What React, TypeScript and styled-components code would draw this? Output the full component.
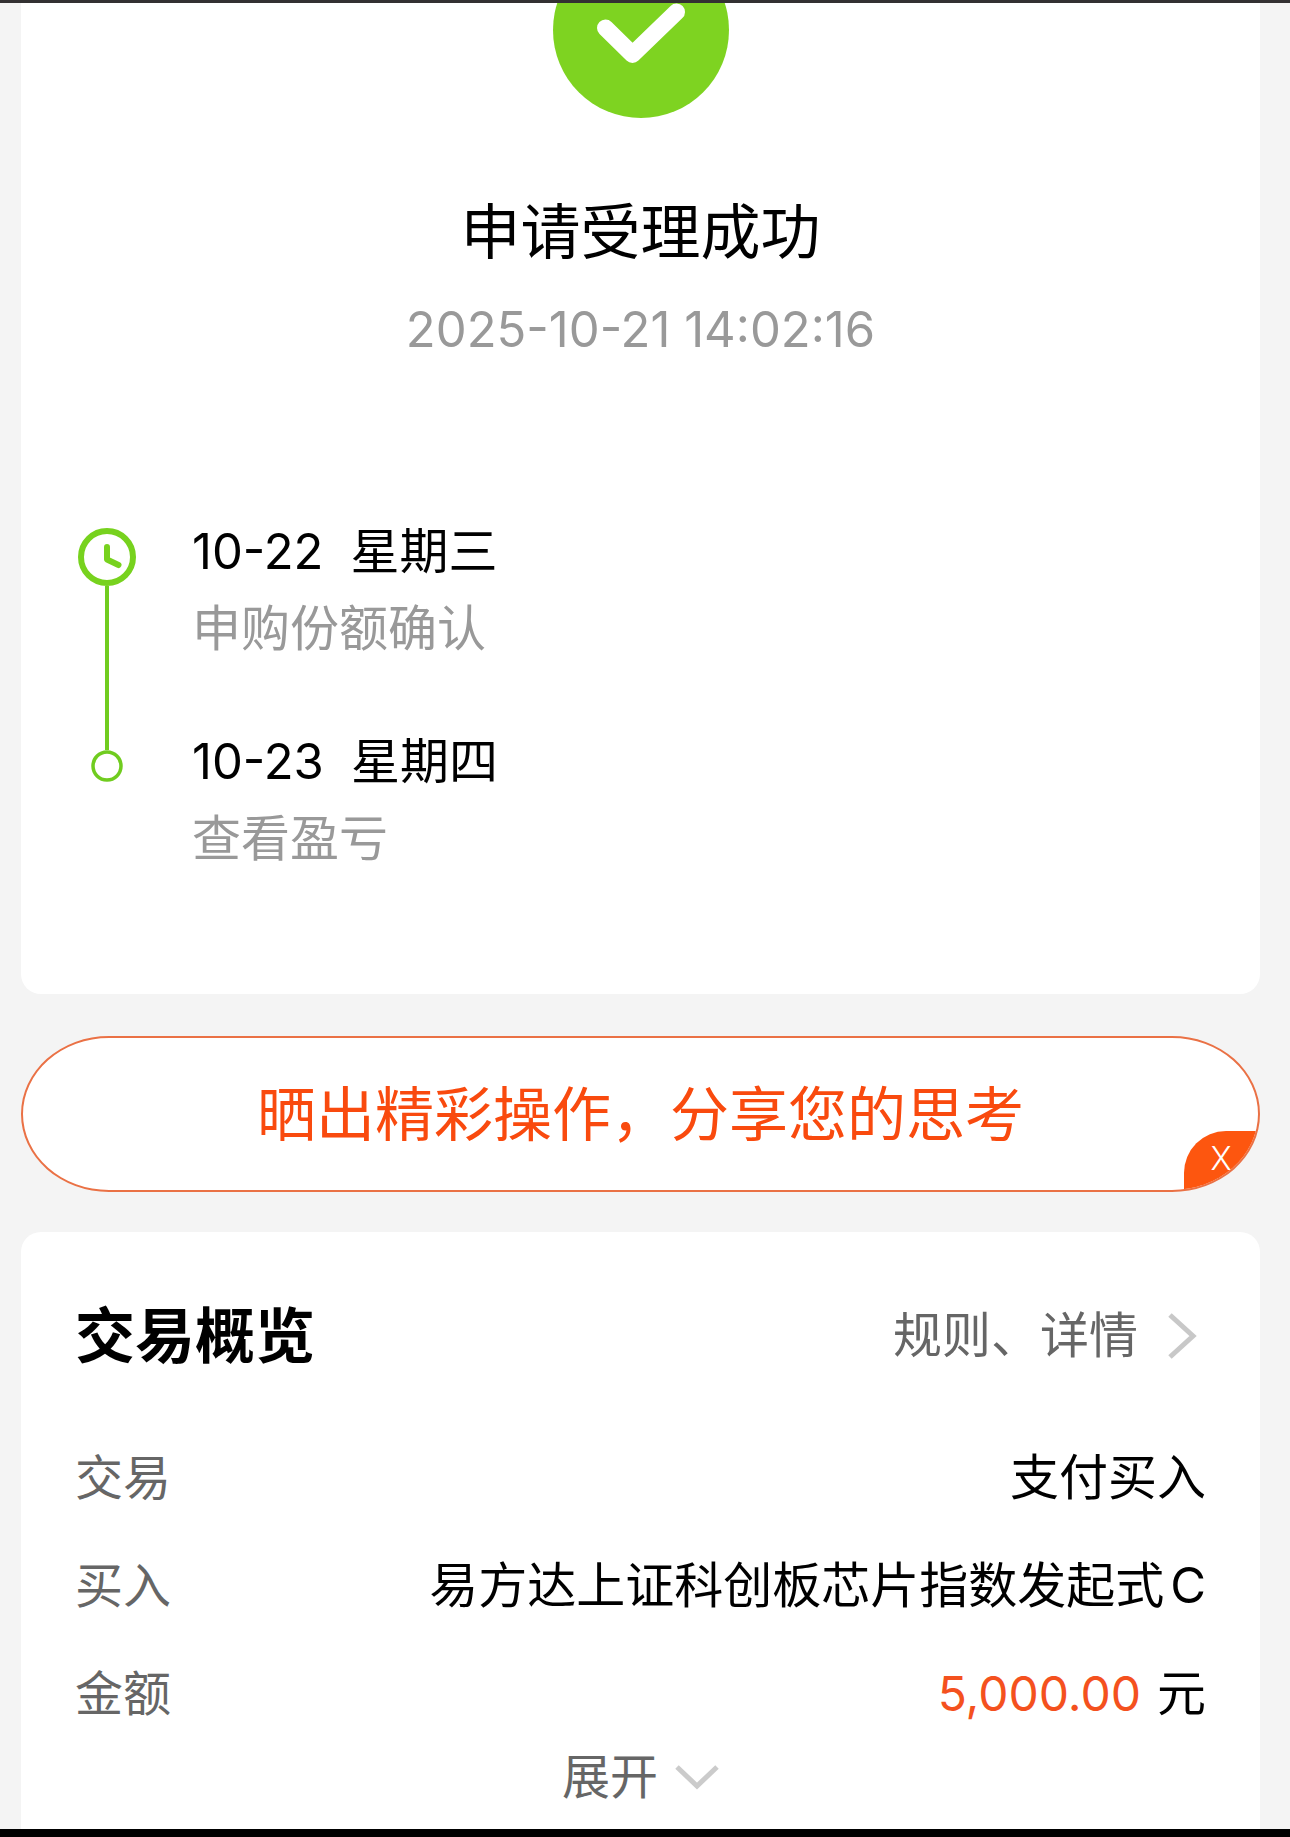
import React from "react";
import styled, { createGlobalStyle } from "styled-components";

const GlobalStyle = createGlobalStyle`
  *, *::before, *::after { box-sizing: border-box; }
  body {
    margin: 0;
    background: #f4f4f4;
    color: #000;
    font-family: Inter, "Noto Sans CJK SC", sans-serif;
    font-size: 49px;
    line-height: 60px;
  }
  button {
    margin: 0;
    padding: 0;
    border: 0;
    background: none;
    color: inherit;
    font: inherit;
    cursor: pointer;
  }
  h1, h2, p, ol, dl, dd { margin: 0; padding: 0; }
`;

const Page = styled.div`
  border-top: 3px solid #333132;
  border-bottom: 9px solid #000;
`;

const Content = styled.main`
  display: flex;
  flex-direction: column;
  padding: 0 30px 0 21px;
`;

const ResultCard = styled.section`
  display: flex;
  flex-direction: column;
  align-items: center;
  padding-bottom: 125px;
  border-radius: 0 0 20px 20px;
  background: #fff;
`;

const SuccessIcon = styled.svg`
  display: block;
  width: 176px;
  height: 115px;
`;

const ResultTitle = styled.h1`
  margin-top: 72px;
  font-size: 60px;
  font-weight: 400;
  line-height: 84px;
`;

const ResultTime = styled.p`
  margin-top: 26px;
  color: #999;
`;

const Timeline = styled.ol`
  align-self: stretch;
  margin-top: 162px;
  padding: 0 56px;
  list-style: none;
`;

const Step = styled.li`
  display: flex;
  gap: 55px;
`;

const Marker = styled.div`
  display: flex;
  flex-direction: column;
  align-items: center;
  width: 60px;
  svg { display: block; flex: none; }
`;

const MarkerLead = styled.div<{ $size: number; $filled?: boolean }>`
  width: 4px;
  height: ${(p) => p.$size}px;
  background: ${(p) => (p.$filled ? "#70cc1f" : "transparent")};
`;

const MarkerLine = styled.div`
  flex: 1;
  width: 4px;
  background: #70cc1f;
`;

const StepBody = styled.div<{ $last?: boolean }>`
  display: flex;
  flex-direction: column;
  gap: 17px;
  padding-bottom: ${(p) => (p.$last ? 0 : 73)}px;
`;

const StepDate = styled.p`
  display: flex;
  gap: 27px;
`;

const StepNote = styled.p`
  color: #999;
`;

const ShareBanner = styled.section`
  position: relative;
  margin: 42px 0 40px;
  overflow: hidden;
  border: 2px solid #ea7145;
  border-radius: 88px / 78px;
  background: #fff;
`;

const ShareButton = styled.button`
  display: block;
  width: 100%;
  padding: 35px 0 33px;
  color: #f94a0e;
  font-size: 59px;
  line-height: 84px;
`;

const CloseButton = styled.button`
  position: absolute;
  right: 0;
  bottom: 0;
  width: 74px;
  height: 59px;
  padding-bottom: 4px;
  border-radius: 42px 0 0 0;
  background: #fd560f;
  color: #fff;
  font-size: 32px;
  font-weight: 300;
  line-height: 40px;
`;

const OverviewCard = styled.section`
  padding: 62px 54px 22px;
  border-radius: 20px 20px 0 0;
  background: #fff;
`;

const OverviewHeader = styled.header`
  display: flex;
  align-items: center;
  justify-content: space-between;
`;

const OverviewTitle = styled.h2`
  font-size: 60px;
  font-weight: 700;
  line-height: 84px;
`;

const DetailLink = styled.a`
  display: flex;
  align-items: center;
  gap: 28px;
  padding-right: 8px;
  color: #666;
  text-decoration: none;
`;

const Rows = styled.dl`
  display: flex;
  flex-direction: column;
  gap: 39px;
  margin-top: 65px;
  line-height: 69px;
`;

const Row = styled.div`
  display: flex;
  justify-content: space-between;
`;

const Label = styled.dt`
  color: #666;
  font-size: 48px;
`;

const Value = styled.dd`
  display: flex;
  gap: 6px;
  text-align: right;
`;

const Amount = styled.span`
  margin-right: 10px;
  color: #f4511e;
  font-size: 48px;
`;

const ExpandButton = styled.button`
  display: flex;
  align-items: center;
  gap: 17px;
  margin: 19px auto 0;
  color: #666;
  font-size: 48px;
`;

const steps = [
  { date: "10-22", weekday: "星期三", note: "申购份额确认" },
  { date: "10-23", weekday: "星期四", note: "查看盈亏" },
];

function ClockIcon() {
  return (
    <svg width="58" height="58" viewBox="0 0 58 58" fill="none" stroke="#77d21e" aria-hidden="true">
      <circle cx="29" cy="29" r="26" strokeWidth="6" />
      <path d="M29 19V31.500L40.500 37" strokeWidth="6" strokeLinecap="round" strokeLinejoin="round" />
    </svg>
  );
}

function DotIcon() {
  return (
    <svg width="32" height="32" viewBox="0 0 32 32" fill="none" aria-hidden="true">
      <circle cx="16" cy="16" r="14" stroke="#70cc1f" strokeWidth="3.500" />
    </svg>
  );
}

export default function App() {
  return (
    <>
      <GlobalStyle />
      <Page>
        <Content>
          <ResultCard>
            <SuccessIcon viewBox="0 61 176 115" aria-hidden="true">
              <circle cx="88" cy="88" r="88" fill="#7ed321" />
              <path
                d="M52.500 86L79.500 112.500L123.500 70"
                fill="none"
                stroke="#fff"
                strokeWidth="17"
                strokeLinecap="round"
                strokeLinejoin="round"
              />
            </SuccessIcon>
            <ResultTitle>申请受理成功</ResultTitle>
            <ResultTime>2025-10-21 14:02:16</ResultTime>
            <Timeline>
              {steps.map((step, i) => {
                const last = i === steps.length - 1;
                return (
                  <Step key={step.date}>
                    <Marker>
                      <MarkerLead $size={i === 0 ? 6 : 18} $filled={i > 0} />
                      {i === 0 ? <ClockIcon /> : <DotIcon />}
                      {!last && <MarkerLine />}
                    </Marker>
                    <StepBody $last={last}>
                      <StepDate>
                        <span>{step.date}</span>
                        <span>{step.weekday}</span>
                      </StepDate>
                      <StepNote>{step.note}</StepNote>
                    </StepBody>
                  </Step>
                );
              })}
            </Timeline>
          </ResultCard>

          <ShareBanner>
            <ShareButton type="button">晒出精彩操作，分享您的思考</ShareButton>
            <CloseButton type="button">X</CloseButton>
          </ShareBanner>

          <OverviewCard>
            <OverviewHeader>
              <OverviewTitle>交易概览</OverviewTitle>
              <DetailLink href="#detail">
                规则、详情
                <svg width="32" height="48" viewBox="0 0 32 48" fill="none" aria-hidden="true">
                  <path d="M4 3L27 24L4 45" stroke="#c8c8c8" strokeWidth="5" />
                </svg>
              </DetailLink>
            </OverviewHeader>
            <Rows>
              <Row>
                <Label>交易</Label>
                <Value>支付买入</Value>
              </Row>
              <Row>
                <Label>买入</Label>
                <Value>
                  <span>易方达上证科创板芯片指数发起式</span>
                  <span>C</span>
                </Value>
              </Row>
              <Row>
                <Label>金额</Label>
                <Value>
                  <Amount>5,000.00</Amount>
                  <span>元</span>
                </Value>
              </Row>
            </Rows>
            <ExpandButton type="button">
              展开
              <svg width="44" height="26" viewBox="0 0 44 26" fill="none" aria-hidden="true">
                <path d="M2 3L22 22L42 3" stroke="#cbcbcb" strokeWidth="5" />
              </svg>
            </ExpandButton>
          </OverviewCard>
        </Content>
      </Page>
    </>
  );
}
